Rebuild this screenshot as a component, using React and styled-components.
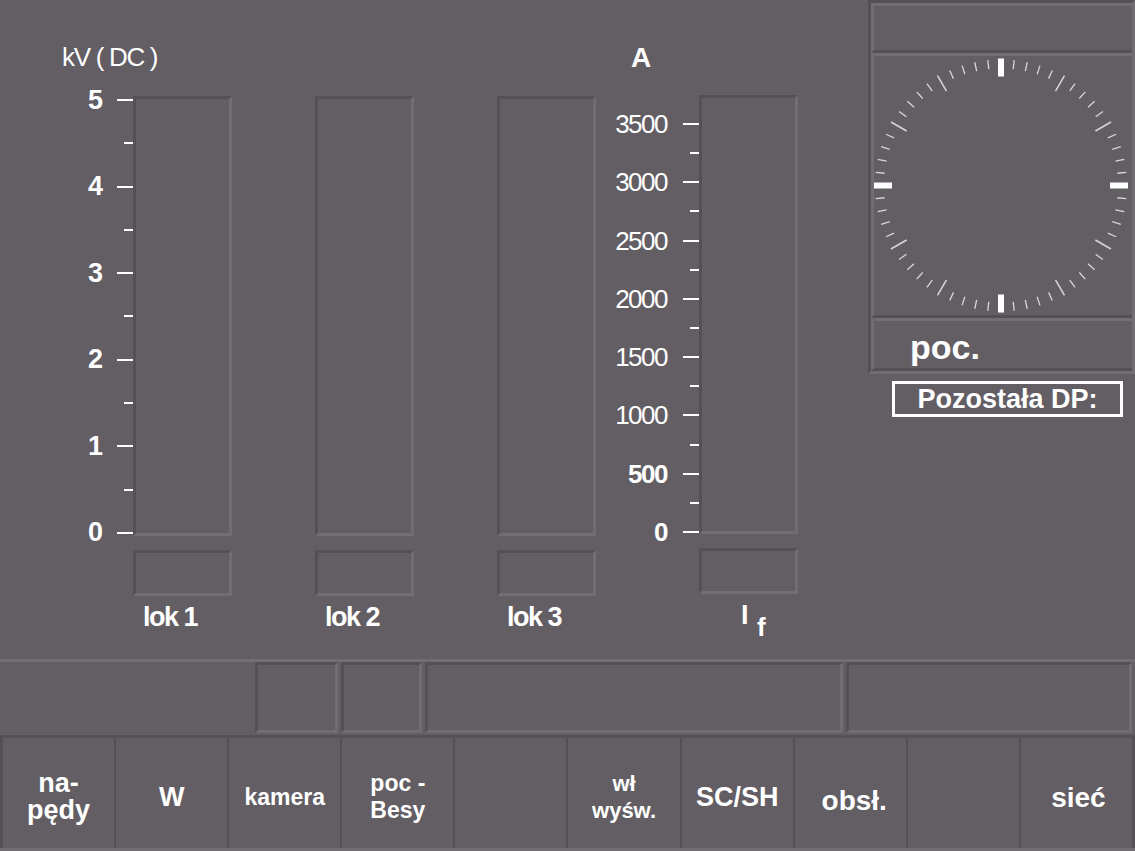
import React from 'react';
import styled, { createGlobalStyle } from 'styled-components';

const BG = '#625e64';
const DARK = '#545058';
const LIGHT = '#716d73';
const SANS = '"Liberation Sans", Arial, sans-serif';

const GlobalStyle = createGlobalStyle`
  html, body {
    margin: 0;
    padding: 0;
    background: ${BG};
  }
  body {
    font-family: ${SANS};
    color: #fff;
  }
`;

export const Screen = styled.div`
  width: 1135px;
  height: 851px;
  background: ${BG};
  display: flex;
  flex-direction: column;
  overflow: hidden;
`;

export const Top = styled.div`
  display: flex;
  height: 659px;
`;

export const Chart = styled.div`
  display: flex;
  align-items: flex-start;
  width: 868px;
  flex-shrink: 0;
`;

export const ScaleCol = styled.div`
  width: ${p => p.$w}px;
  flex-shrink: 0;
  padding-top: 45px;
  display: flex;
  flex-direction: column;
`;

export const Unit = styled.div`
  height: 25px;
  line-height: 25px;
  padding-left: ${p => p.$indent}px;
  font-size: ${p => (p.$bold ? 28 : 26)}px;
  font-weight: ${p => (p.$bold ? 700 : 400)};
  letter-spacing: ${p => (p.$bold ? 0 : -1.3)}px;
  white-space: nowrap;
`;

export const Ticks = styled.div`
  margin-top: ${p => p.$top}px;
  height: ${p => p.$h}px;
  display: flex;
  flex-direction: column;
  justify-content: space-between;
`;

export const TickRow = styled.div`
  height: ${p => p.$rh}px;
  display: flex;
  align-items: center;
  justify-content: flex-end;
`;

export const TickLabel = styled.span`
  font-size: ${p => p.$size}px;
  font-weight: ${p => (p.$bold ? 700 : 400)};
  letter-spacing: ${p => p.$track || 0}px;
  line-height: 1;
  margin-right: ${p => p.$gap}px;
`;

export const Tick = styled.span`
  width: ${p => (p.$major ? 16 : 9)}px;
  height: 2px;
  background: #fff;
`;

export const BarCol = styled.div`
  width: 99px;
  flex-shrink: 0;
  margin-right: ${p => p.$after || 0}px;
  padding-top: ${p => p.$top}px;
  display: flex;
  flex-direction: column;
`;

export const Sunken = styled.div`
  box-sizing: border-box;
  height: ${p => p.$h}px;
  border: 3px solid;
  border-color: ${DARK} ${LIGHT} ${LIGHT} ${DARK};
  margin-top: ${p => p.$mt || 0}px;
`;

export const BarLabel = styled.div`
  margin-top: 8px;
  height: 26px;
  line-height: 26px;
  padding-left: ${p => p.$indent}px;
  font-size: 27px;
  font-weight: 700;
  letter-spacing: -1.5px;
  white-space: nowrap;

  sub {
    font-size: 26px;
    font-weight: 700;
    vertical-align: -12px;
    margin-left: 10px;
  }
`;

export const Panel = styled.div`
  width: 267px;
  flex-shrink: 0;
  display: flex;
  flex-direction: column;
`;

export const PanelFrame = styled.div`
  display: flex;
  flex-direction: column;
  border-left: 3px solid ${DARK};
  border-top: 3px solid ${DARK};
  border-bottom: 3px solid ${LIGHT};
  border-right: 3px solid ${LIGHT};
`;

export const Raised = styled.div`
  box-sizing: border-box;
  height: ${p => p.$h}px;
  border-top: 3px solid ${LIGHT};
  border-left: 3px solid ${LIGHT};
  border-bottom: 3px solid ${DARK};
  display: flex;
  align-items: center;
`;

export const PocText = styled.div`
  padding: 5px 0 0 36px;
  font-size: 34px;
  font-weight: 700;
  line-height: 42px;
`;

export const Remaining = styled.div`
  box-sizing: border-box;
  margin: 7px 0 0 24px;
  width: 231px;
  height: 36px;
  border: 3px solid #fff;
  display: flex;
  align-items: center;
  justify-content: center;
  font-size: 27px;
  font-weight: 700;
  white-space: nowrap;
`;

export const Bottom = styled.div`
  flex: 1;
  display: flex;
  flex-direction: column;
  border-top: 3px solid ${LIGHT};
`;

export const StatusRow = styled.div`
  display: flex;
  align-items: flex-start;
  gap: 3px;
  height: 73px;
  border-bottom: 3px solid ${DARK};
`;

export const StatusSpacer = styled.div`
  width: 252px;
  flex-shrink: 0;
`;

export const StatusBox = styled(Sunken)`
  width: ${p => p.$w}px;
  flex-shrink: 0;
`;

export const ButtonRow = styled.div`
  flex: 1;
  display: grid;
  grid-template-columns: repeat(10, 1fr);
  gap: 2px;
  padding: 0 3px;
  background: ${DARK};
  border-bottom: 3px solid ${LIGHT};
`;

export const SoftKey = styled.div`
  min-width: 0;
  background: ${BG};
  display: flex;
  align-items: center;
  justify-content: center;
  text-align: center;
  font-size: ${p => p.$size || 24}px;
  font-weight: 700;
  line-height: 27px;
  padding-top: 8px;
  white-space: pre-line;
`;

export const KeyCaption = styled.span`
  margin: ${p => p.$drop || 0}px 0 0 ${p => p.$shift || 0}px;
`;

const Clock = () => {
  const marks = [];
  for (let i = 0; i < 60; i++) {
    const a = (i * 6 * Math.PI) / 180;
    const s = Math.sin(a);
    const c = -Math.cos(a);
    if (i % 15 === 0) {
      marks.push(
        <rect
          key={i}
          x={-3}
          y={-127}
          width={6}
          height={18}
          fill="#fff"
          transform={`rotate(${i * 6})`}
        />
      );
    } else {
      const r1 = i % 5 === 0 ? 109 : 117;
      const r2 = i % 5 === 0 ? 127 : 126;
      marks.push(
        <line
          key={i}
          x1={s * r1}
          y1={c * r1}
          x2={s * r2}
          y2={c * r2}
          stroke="#d8d6da"
          strokeWidth={i % 5 === 0 ? 1.5 : 1.3}
        />
      );
    }
  }
  return (
    <svg width="258" height="259" viewBox="-127 -129.5 258 259">
      {marks}
    </svg>
  );
};

const leftScale = [5, null, 4, null, 3, null, 2, null, 1, null, 0];
const rightScale = [3500, null, 3000, null, 2500, null, 2000, null, 1500, null, 1000, null, 500, null, 0];

const buttons = [
  { text: 'na-\npędy', size: 27 },
  { text: 'W', size: 27 },
  { text: 'kamera', size: 23 },
  { text: 'poc -\nBesy', size: 23 },
  { text: '' },
  { text: 'wł\nwyśw.', size: 22 },
  { text: 'SC/SH', size: 27 },
  { text: 'obsł.', size: 28, drop: 6, shift: 8 },
  { text: '' },
  { text: 'sieć', size: 28, shift: 4 },
];

export default function App() {
  return (
    <Screen>
      <GlobalStyle />
      <Top>
        <Chart>
          <ScaleCol $w={133}>
            <Unit $indent={62}>kV ( DC )</Unit>
            <Ticks $top={17} $h={459}>
              {leftScale.map((v, i) => (
                <TickRow key={i} $rh={26}>
                  {v !== null && (
                    <TickLabel $size={27} $bold $gap={14}>
                      {v}
                    </TickLabel>
                  )}
                  <Tick $major={v !== null} />
                </TickRow>
              ))}
            </Ticks>
          </ScaleCol>

          {['lok 1', 'lok 2', 'lok 3'].map((name, i) => (
            <BarCol key={name} $top={96} $after={i < 2 ? 83 : 0}>
              <Sunken $h={440} />
              <Sunken $h={46} $mt={14} />
              <BarLabel $indent={10}>{name}</BarLabel>
            </BarCol>
          ))}

          <ScaleCol $w={103}>
            <Unit $indent={35} $bold>A</Unit>
            <Ticks $top={42} $h={432}>
              {rightScale.map((v, i) => (
                <TickRow key={i} $rh={24}>
                  {v !== null && (
                    <TickLabel $size={26} $track={-1.5} $bold={v <= 500} $gap={16}>
                      {v}
                    </TickLabel>
                  )}
                  <Tick $major={v !== null} />
                </TickRow>
              ))}
            </Ticks>
          </ScaleCol>

          <BarCol $top={95}>
            <Sunken $h={439} />
            <Sunken $h={46} $mt={14} />
            <BarLabel $indent={42}>
              I<sub>f</sub>
            </BarLabel>
          </BarCol>
        </Chart>

        <Panel>
          <PanelFrame>
            <Raised $h={50} />
            <Raised $h={265}>
              <Clock />
            </Raised>
            <Raised $h={53}>
              <PocText>poc.</PocText>
            </Raised>
          </PanelFrame>
          <Remaining>Pozostała DP:</Remaining>
        </Panel>
      </Top>

      <Bottom>
        <StatusRow>
          <StatusSpacer />
          <StatusBox $w={83} $h={71} />
          <StatusBox $w={81} $h={71} />
          <StatusBox $w={418} $h={71} />
          <StatusBox $w={286} $h={71} />
        </StatusRow>
        <ButtonRow>
          {buttons.map((b, i) => (
            <SoftKey key={i} $size={b.size}>
              <KeyCaption $drop={b.drop} $shift={b.shift}>
                {b.text}
              </KeyCaption>
            </SoftKey>
          ))}
        </ButtonRow>
      </Bottom>
    </Screen>
  );
}
